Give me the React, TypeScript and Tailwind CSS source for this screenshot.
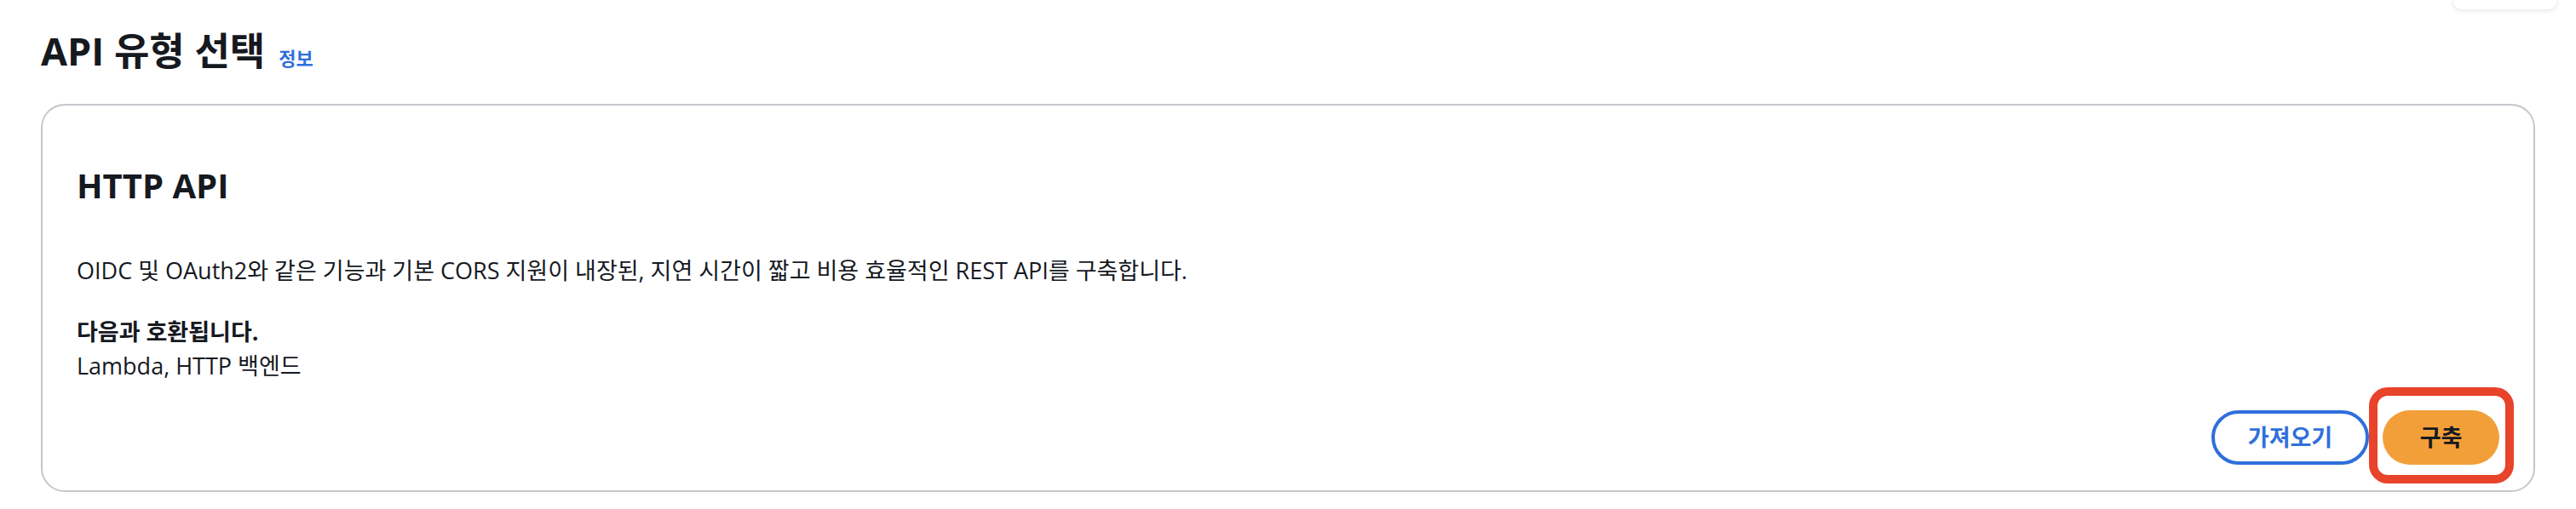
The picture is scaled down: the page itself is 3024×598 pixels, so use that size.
import React from "react";

const App: React.FC = () => {
  return (
    <div className="relative w-[3024px] h-[598px] bg-white text-[#16191f] font-['Open_Sans','Noto_Sans_CJK_KR',sans-serif] overflow-hidden">
      {/* cut-off floating panel at top right */}
      <div className="absolute top-0 right-[21px] w-[125px] h-[12px] rounded-b-[14px] bg-white border border-t-0 border-[#eceef0] shadow-[0_2px_4px_rgba(0,0,0,0.06)]" />

      <div className="px-[48px] pt-[30px]">
        {/* Header */}
        <div className="flex items-baseline gap-[16px] h-[60px]">
          <h2 className="text-[45px] leading-[60px] font-bold">
            API 유형 선택
          </h2>
          <a className="text-[22px] leading-[30px] font-bold text-[#2f6fdb]">
            정보
          </a>
        </div>

        {/* Card */}
        <div className="mt-[32px] h-[456px] rounded-[28px] border-2 border-[#c6c6cd] px-[40px] pt-[70px] pb-[30px] flex flex-col">
          <h3 className="text-[40px] leading-[48px] font-bold">HTTP API</h3>
          <p className="mt-[56px] text-[27px] leading-[40px]">
            OIDC 및 OAuth2와 같은 기능과 기본 CORS 지원이 내장된, 지연 시간이
            짧고 비용 효율적인 REST API를 구축합니다.
          </p>
          <p className="mt-[32px] text-[27px] leading-[40px] font-bold">
            다음과 호환됩니다.
          </p>
          <p className="text-[27px] leading-[40px]">Lambda, HTTP 백엔드</p>

          {/* Actions */}
          <div className="mt-auto flex justify-end gap-[16px]">
            <button className="w-[185px] h-[64px] rounded-full border-4 border-[#2f6fdb] text-[27px] font-bold text-[#2f6fdb] flex items-center justify-center">
              가져오기
            </button>
            <div className="relative">
              <div className="absolute -left-[16px] -right-[17px] -top-[27px] -bottom-[22px] rounded-[22px] border-[10px] border-[#e8432b]" />
              <button className="relative w-[137px] h-[64px] rounded-full bg-[#f29f3a] text-[27px] font-bold text-[#16191f] flex items-center justify-center">
                구축
              </button>
            </div>
          </div>
        </div>
      </div>
    </div>
  );
};

export default App;
